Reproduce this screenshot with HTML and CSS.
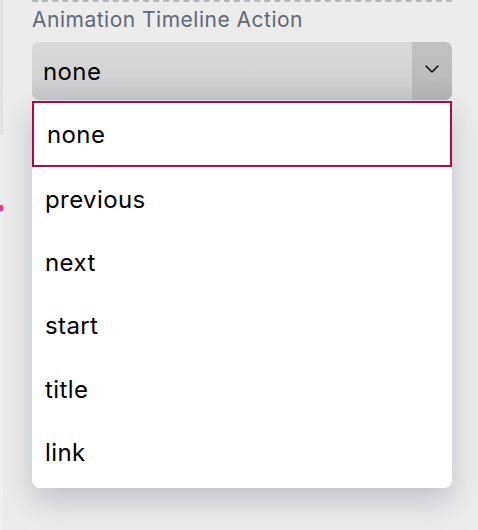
FILE: index.html
```html
<!DOCTYPE html>
<html>
<head>
<meta charset="utf-8">
<link rel="stylesheet" href="styles.css">
</head>
<body>
<div class="page">
  <div class="edge">
    <div class="edge-top"></div>
    <div class="edge-gap"></div>
    <div class="edge-mark"></div>
    <div class="edge-rest"></div>
  </div>
  <div class="main">
    <div class="divider"></div>
    <div class="label">Animation Timeline Action</div>
    <div class="select">
      <div class="select-value">none</div>
      <div class="select-arrow">
        <svg width="16" height="10" viewBox="0 0 16 10"><path d="M2 2 L8 8 L14 2" fill="none" stroke="#111" stroke-width="1.6" stroke-linecap="round" stroke-linejoin="round"/></svg>
      </div>
    </div>
    <ul class="menu">
      <li class="option active">none</li>
      <li class="option">previous</li>
      <li class="option">next</li>
      <li class="option">start</li>
      <li class="option">title</li>
      <li class="option">link</li>
    </ul>
  </div>
</div>
</body>
</html>
```
FILE: styles.css
```css
html, body {
  margin: 0;
  padding: 0;
}
body {
  background: #ececec;
  font-family: Inter, "Liberation Sans", sans-serif;
  width: 478px;
  height: 530px;
  overflow: hidden;
}
.page {
  display: flex;
  height: 530px;
}
.edge {
  width: 3px;
  display: flex;
  flex-direction: column;
}
.edge-top {
  height: 135px;
  background: #e2e2e2;
}
.edge-gap {
  height: 70px;
}
.edge-mark {
  height: 6px;
  background: #ec3b8d;
}
.edge-rest {
  flex: 1;
  background: #f1f1f2;
}
.main {
  margin-left: 29px;
  width: 420px;
  display: flex;
  flex-direction: column;
}
.divider {
  border-top: 2px dashed #b3b7be;
  height: 0;
}
.label {
  margin-top: 5px;
  font-size: 21px;
  letter-spacing: 0.5px;
  line-height: 26px;
  color: #5e6879;
}
.select {
  margin-top: 9px;
  height: 58px;
  border-radius: 7px;
  display: flex;
  overflow: hidden;
  background: linear-gradient(#d9d9d9 0%, #d3d3d4 60%, #c4c5c9 100%);
}
.select-value {
  flex: 1;
  display: flex;
  align-items: center;
  padding-left: 11px;
  font-size: 24px;
  letter-spacing: 0.4px;
  color: #000;
}
.select-arrow {
  width: 40px;
  display: flex;
  align-items: center;
  justify-content: center;
  padding-bottom: 4px;
  background: linear-gradient(#c1c1c1 0%, #bcbcbd 60%, #b1b2b6 100%);
}
.menu {
  list-style: none;
  margin: 1px 0 0 0;
  padding: 0 0 4px 0;
  background: #fff;
  border-radius: 0 0 8px 8px;
  box-shadow: 0 12px 30px rgba(150, 158, 175, 0.55);
}
.option {
  height: 63.4px;
  display: flex;
  align-items: center;
  padding-left: 13px;
  padding-top: 1px;
  box-sizing: border-box;
  font-size: 24px;
  letter-spacing: 0.4px;
  color: #000;
}
.option.active {
  height: 66px;
  padding-top: 0;
  border: 2px solid #b0084e;
  padding-left: 13px;
}
```
